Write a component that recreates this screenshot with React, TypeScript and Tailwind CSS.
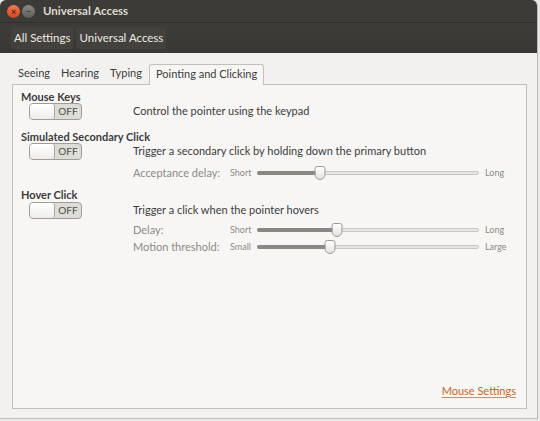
import React from 'react'

const font = { fontFamily: 'Lato, "Liberation Sans", sans-serif' }

const Toggle = () => (
  <div className="flex h-[17px] w-[53px] overflow-hidden rounded-[4px] border border-[#9f9d98] bg-[#dedcd7]">
    <div className="h-full w-[25px] rounded-[3px] border-r border-[#a8a6a1] bg-gradient-to-b from-white to-[#eeedeb]" />
    <div className="flex flex-1 items-center justify-center text-[10px] text-[#4c4c4c]">OFF</div>
  </div>
)

const Slider = ({ pct, left, right }: { pct: number; left: string; right: string }) => (
  <div className="flex h-[14px] items-center">
    <span className="w-[27px] text-[9px] text-[#8c8a85]">{left}</span>
    <div className="relative h-[14px] w-[222px]">
      <div className="absolute left-0 right-0 top-[5px] h-[4px] rounded-full border border-[#c9c7c2] bg-[#e6e5e2]" />
      <div
        className="absolute left-0 top-[5px] h-[4px] rounded-full bg-[#8a8883]"
        style={{ width: `${pct}%` }}
      />
      <div
        className="absolute top-0 h-[14px] w-[11px] -translate-x-1/2 rounded-b-[6px] rounded-t-[3px] border border-[#9d9b96] bg-gradient-to-b from-white to-[#e4e2de]"
        style={{ left: `${pct}%` }}
      />
    </div>
    <span className="ml-[6px] text-[9px] text-[#8c8a85]">{right}</span>
  </div>
)

export default function App() {
  return (
    <div className="h-[421px] w-[540px] bg-[#e9e8e6]" style={font}>
      <div className="flex h-[419px] w-[538px] flex-col overflow-hidden rounded-t-[6px] border-r border-b border-[#bdbbb6] bg-[#f2f1f0]">
        {/* title bar */}
        <div className="flex h-[22px] items-center bg-[#3c3b37] pl-[7px]">
          <div className="flex items-center gap-[2px]">
            <div className="h-[13px] w-[13px] rounded-full bg-gradient-to-b from-[#f47a53] to-[#d1461c] text-center text-[9px] font-bold leading-[13px] text-[#5a1a08]">×</div>
            <div className="h-[13px] w-[13px] rounded-full bg-gradient-to-b from-[#8a8984] to-[#5f5e5a] text-center text-[9px] font-bold leading-[11px] text-[#3c3b37]">–</div>
          </div>
          <span className="ml-[8px] text-[11.5px] font-bold text-[#dfdbd2]">Universal Access</span>
        </div>
        {/* toolbar */}
        <div className="flex h-[31px] items-center gap-[3px] border-t border-[#2f2e2b] bg-gradient-to-b from-[#3d3c38] to-[#393834] pl-[11px]">
          <span className="rounded-[3px] bg-[#42413d] px-[3px] py-[2px] text-[11.5px] text-[#efebe4]">All Settings</span>
          <span className="rounded-[3px] bg-[#42413d] px-[3px] py-[2px] text-[11.5px] text-[#efebe4]">Universal Access</span>
        </div>

        {/* tabs */}
        <div className="mt-[12px] flex h-[19px] items-end pl-[18px] text-[11px] text-[#3c3c3c]">
          <span className="mb-[3px]">Seeing</span>
          <span className="mb-[3px] ml-[11px]">Hearing</span>
          <span className="mb-[3px] ml-[11px]">Typing</span>
          <span className="relative z-10 -mb-px ml-[7px] flex h-[21px] items-center rounded-t-[3px] border border-b-0 border-[#c2c0bb] bg-[#f7f6f5] px-[6px] pb-[1px]">
            Pointing and Clicking
          </span>
        </div>

        {/* panel */}
        <div className="mx-[12px] flex h-[325px] w-[515px] flex-col border border-[#c2c0bb] bg-[#f7f6f5] pl-[8px] pr-[10px] text-[11px] text-[#3c3c3c]">
          <div className="mt-[5px] font-bold leading-[13px]">Mouse Keys</div>
          <div className="flex items-center">
            <div className="ml-[8px] w-[104px]"><Toggle /></div>
            <span>Control the pointer using the keypad</span>
          </div>

          <div className="mt-[10px] font-bold leading-[13px]">Simulated Secondary Click</div>
          <div className="flex items-center">
            <div className="ml-[8px] w-[104px]"><Toggle /></div>
            <span>Trigger a secondary click by holding down the primary button</span>
          </div>
          <div className="mt-[6px] flex h-[14px] items-center pl-[112px] leading-[14px]">
            <span className="w-[97px] text-[#8c8a85]">Acceptance delay:</span>
            <Slider pct={28.5} left="Short" right="Long" />
          </div>

          <div className="mt-[8px] font-bold leading-[13px]">Hover Click</div>
          <div className="mt-[1px] flex items-center">
            <div className="ml-[8px] w-[104px]"><Toggle /></div>
            <span>Trigger a click when the pointer hovers</span>
          </div>
          <div className="mt-[4px] flex h-[14px] items-center pl-[112px] leading-[14px]">
            <span className="w-[97px] text-[#8c8a85]">Delay:</span>
            <Slider pct={36} left="Short" right="Long" />
          </div>
          <div className="mt-[3px] flex h-[14px] items-center pl-[112px] leading-[14px]">
            <span className="w-[97px] text-[#8c8a85]">Motion threshold:</span>
            <Slider pct={33} left="Small" right="Large" />
          </div>

          <div className="mt-auto mb-[9px] flex justify-end">
            <span className="text-[11px] text-[#c0652c] underline decoration-[#d08a5c] underline-offset-2">Mouse Settings</span>
          </div>
        </div>
      </div>
    </div>
  )
}
